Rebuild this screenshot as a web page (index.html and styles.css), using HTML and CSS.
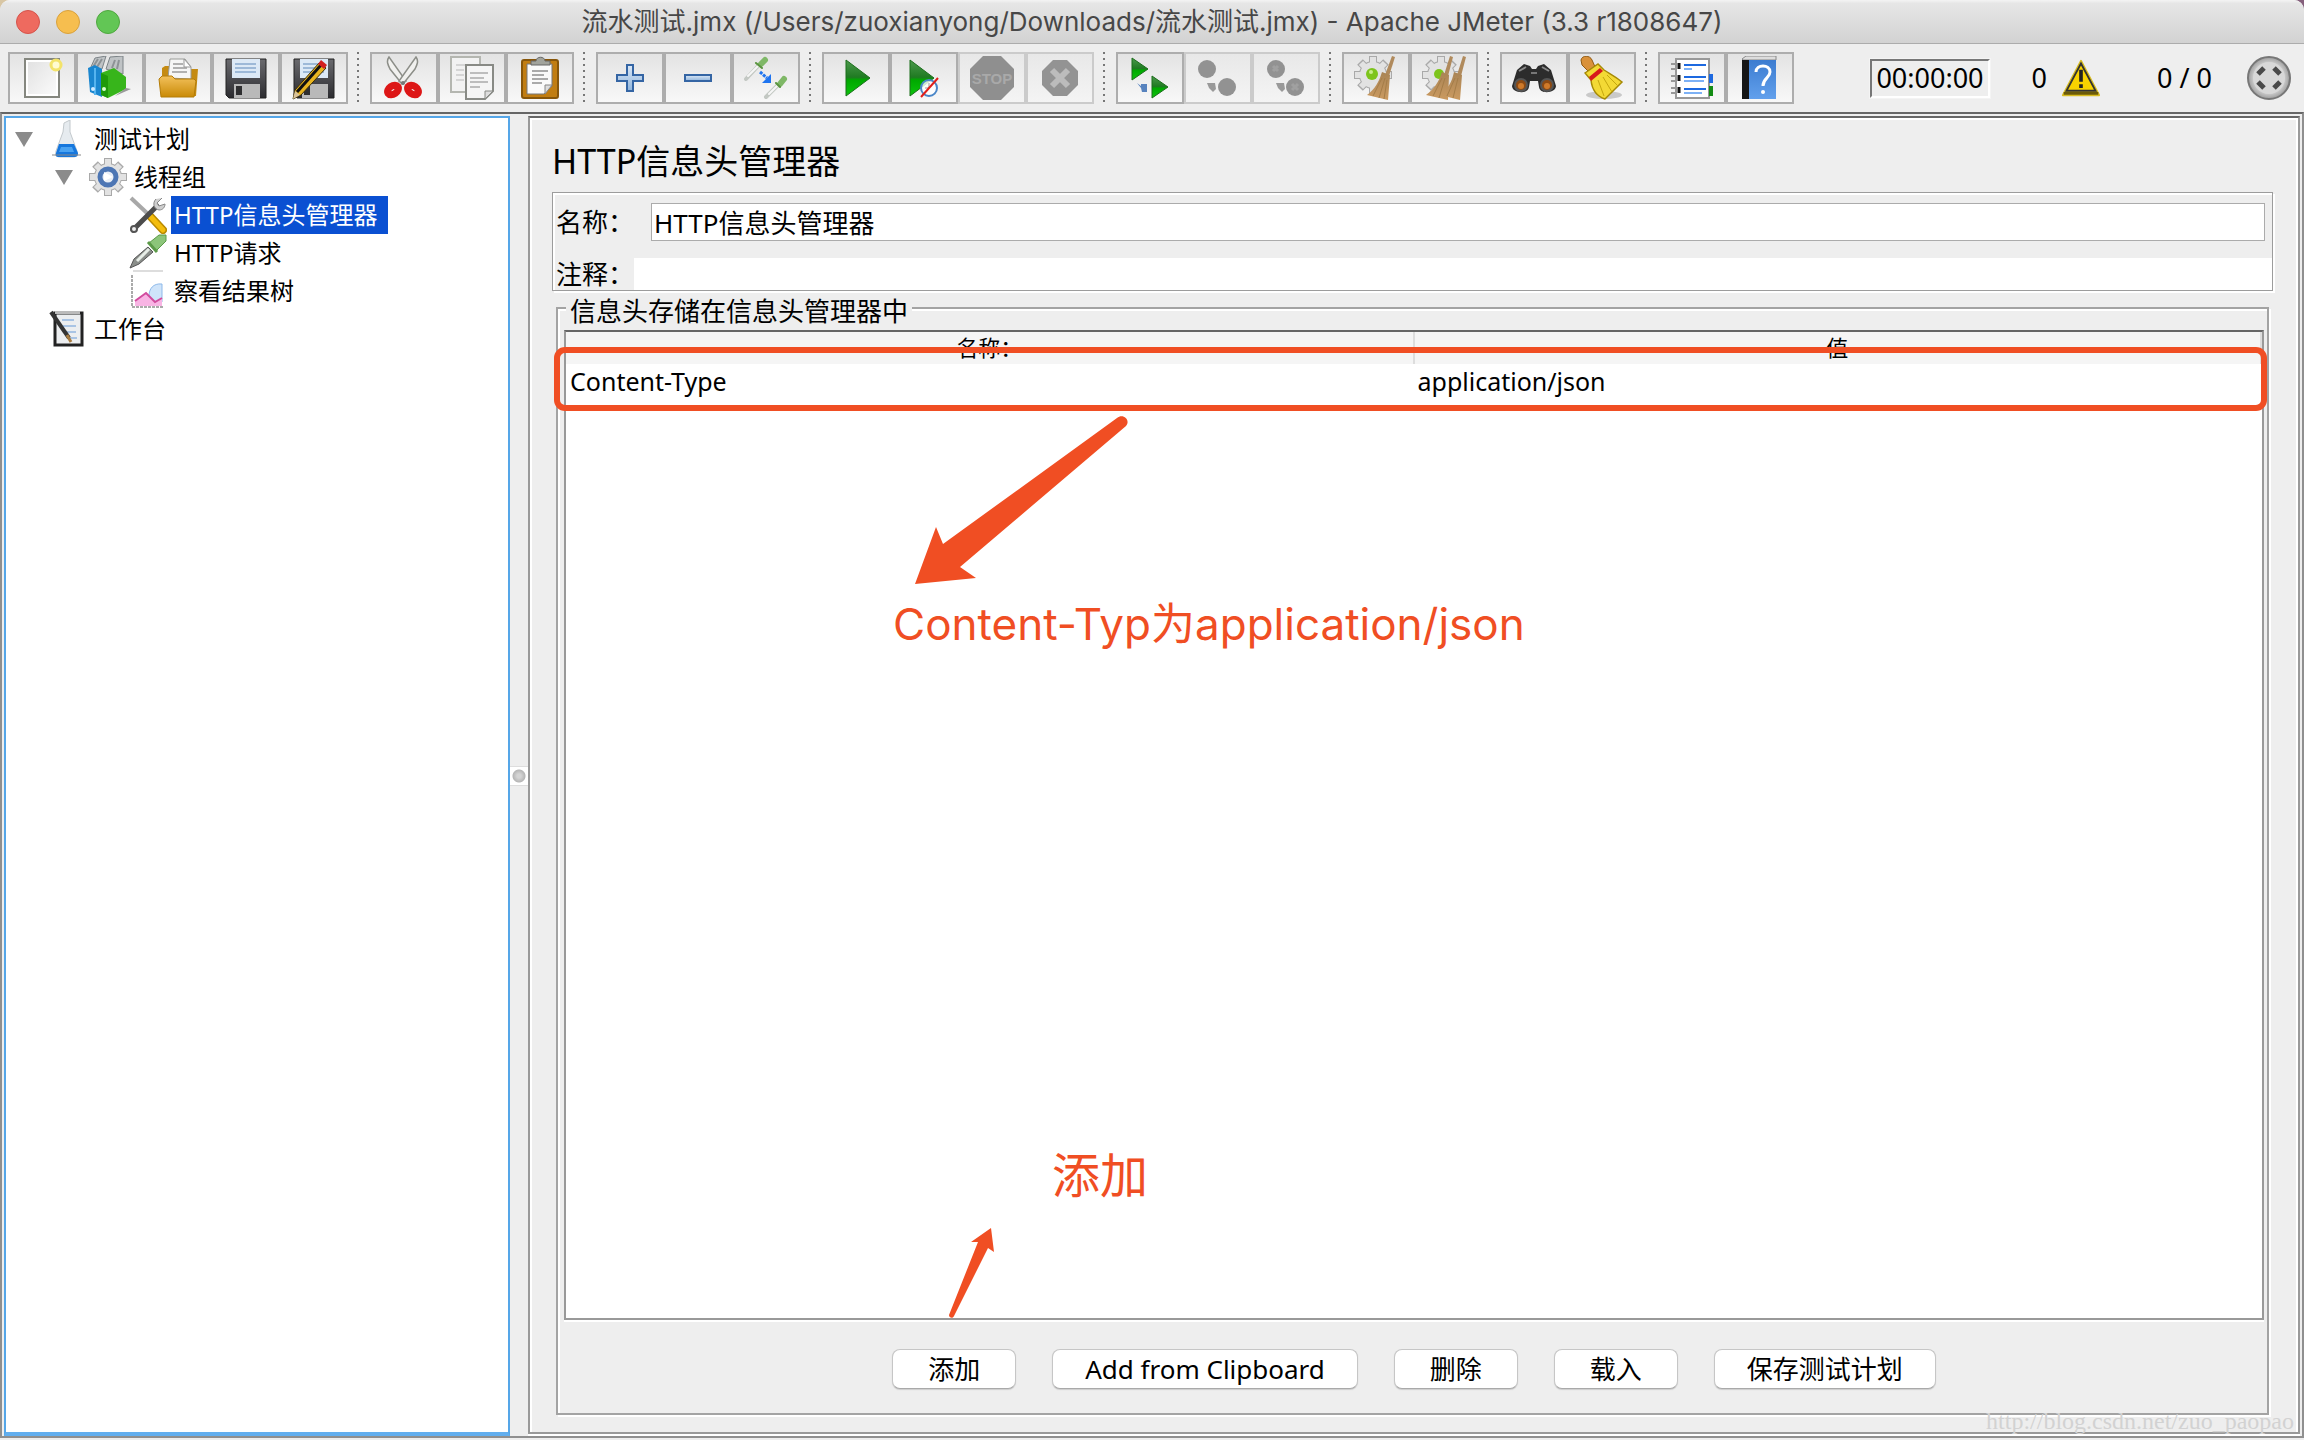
FILE: index.html
```html
<!DOCTYPE html>
<html lang="zh-CN">
<head>
<meta charset="utf-8">
<title>流水测试.jmx - Apache JMeter</title>
<link rel="stylesheet" href="styles.css">
</head>
<body>
<svg class="defs" aria-hidden="true">
  <defs>
    <linearGradient id="green" x1="0" y1="0" x2="0" y2="1"><stop offset="0" stop-color="#4c9a4c"/><stop offset=".48" stop-color="#1f7a22"/><stop offset=".55" stop-color="#00a800"/><stop offset="1" stop-color="#0cc40c"/></linearGradient>
    <linearGradient id="folder" x1="0" y1="0" x2="0" y2="1"><stop offset="0" stop-color="#f3c15c"/><stop offset="1" stop-color="#c98a06"/></linearGradient>
    <linearGradient id="disk" x1="0" y1="0" x2="0" y2="1"><stop offset="0" stop-color="#6a6a6e"/><stop offset="1" stop-color="#2c2c30"/></linearGradient>
    <linearGradient id="paper" x1="0" y1="0" x2="1" y2="1"><stop offset="0" stop-color="#e2e2e2"/><stop offset="1" stop-color="#fafafa"/></linearGradient>
    <linearGradient id="bluebar" x1="0" y1="0" x2="0" y2="1"><stop offset="0" stop-color="#dbe8f6"/><stop offset="1" stop-color="#8fb4dc"/></linearGradient>
    <linearGradient id="straw" x1="0" y1="0" x2="0" y2="1"><stop offset="0" stop-color="#a98455"/><stop offset="1" stop-color="#cb9a60"/></linearGradient>
    <linearGradient id="book" x1="0" y1="0" x2="0" y2="1"><stop offset="0" stop-color="#3c7cd0"/><stop offset="1" stop-color="#62a0ec"/></linearGradient>
    <radialGradient id="knob"><stop offset="0" stop-color="#fff"/><stop offset=".7" stop-color="#d2d2d2"/><stop offset="1" stop-color="#9c9c9c"/></radialGradient>
    <g id="gear"><circle r="14" fill="#a9a9a9"/><path d="M0-19V19M-19 0H19M-13-13 13 13M-13 13 13-13" stroke="#a9a9a9" stroke-width="8"/><path d="M0-18V18M-18 0H18M-12-12 12 12M-12 12 12-12" stroke="#e2e2e2" stroke-width="6"/><circle r="13" fill="#e2e2e2"/></g>
    <g id="floppy"><path d="M2 3h40v39H5l-3-3z" fill="url(#disk)" stroke="#222"/><path d="M8 3h28v19H8z" fill="#dce9f6"/><path d="M11 8h21M11 12h21M11 16h21" stroke="#9db9d8" stroke-width="2"/><path d="M10 28h26v14H10z" fill="#b9b9b9"/><path d="M12 30h6v9h-6z" fill="#2f2f31"/></g>
  </defs>
</svg>

<header class="titlebar">
  <div class="lights"><span class="light close"></span><span class="light minimise"></span><span class="light zoom"></span></div>
  <h1 class="window-title">流水测试.jmx (/Users/zuoxianyong/Downloads/流水测试.jmx) - Apache JMeter (3.3 r1808647)</h1>
</header>

<div class="toolbar" role="toolbar">
  <div class="group">
    <button class="tool" aria-label="新建"><svg viewBox="0 0 44 44"><path d="M5 3h34v38H5z" fill="#fff" stroke="#85877f" stroke-width="2"/><path d="M8 6h28v32H8z" fill="url(#paper)"/><circle cx="36" cy="9" r="5" fill="#fffbd0" stroke="#f3e36a" stroke-width="3"/></svg></button>
    <button class="tool" aria-label="模板"><svg viewBox="0 0 44 44"><path d="M2 13 7 2 18 0 14 13zM18 13 22 1 35 0v18z" fill="#bfc3c5" stroke="#7c8387"/><path d="M5 11 10 3M9 11 14 3M24 12 27 4M29 13 31 4" stroke="#8d9295" stroke-width="2"/><path d="M0 12 7 9l7 4v28L2 36z" fill="#1a86cf"/><path d="M7 12v27" stroke="#55b4ef" stroke-width="2"/><path d="M13 17 26 12l12 9v12L20 42l-7-3z" fill="#37b51b"/><path d="M13 17l7 3v22l-7-3z" fill="#1f9a0a"/><circle cx="16" cy="33" r="2" fill="#d9ffd0"/><circle cx="5" cy="33" r="2" fill="#cfeaff"/><path d="M38 32l5 1-16 7z" fill="#999"/></svg></button>
    <button class="tool" aria-label="打开"><svg viewBox="0 0 44 44"><path d="M6 12 9 10h4v10h22v-7h7L40 40H6z" fill="#c58b12"/><path d="M12 22 14 3h15l6 8v12z" fill="#f6f6f6" stroke="#9a9c98"/><path d="M17 8h10M17 12h14M16 16h15" stroke="#b1b1b1" stroke-width="2"/><path d="M28 3v8h7z" fill="#fff" stroke="#999"/><path d="M3 23l3-3h10l3 3h19l2 2-2 16H5z" fill="url(#folder)" stroke="#b47c08"/></svg></button>
    <button class="tool" aria-label="保存"><svg viewBox="0 0 44 44"><use href="#floppy"/></svg></button>
    <button class="tool" aria-label="另存为"><svg viewBox="0 0 44 44"><use href="#floppy"/><path d="M1 43 3 34 27 7l7 5L9 39z" fill="#e9b520" stroke="#3d2f0b"/><path d="M5 36 29 9" stroke="#111" stroke-width="3"/><path d="m26 8 3-4 6 5-3 4z" fill="#d32020"/><path d="m1 43 2-8 5 4z" fill="#d9c39a"/></svg></button>
  </div>
  <span class="divider"></span>
  <div class="group">
    <button class="tool" aria-label="剪切"><svg viewBox="0 0 44 44"><g fill="#f1f1ef" stroke="#8c8e88" stroke-width="1.5"><path d="M7 1C4 5 6 9 8 13l12 15 4-3z"/><path d="M34 1c3 4 1 8-1 12L21 28l-4-3z"/></g><g fill="none" stroke="#dd1717" stroke-width="7"><ellipse cx="11" cy="34" rx="6" ry="4" transform="rotate(-35 11 34)"/><ellipse cx="31" cy="34" rx="6" ry="4" transform="rotate(35 31 34)"/></g><circle cx="21" cy="27" r="2" fill="#777"/></svg></button>
    <button class="tool" aria-label="复制"><svg viewBox="0 0 44 44"><path d="M1 1h29v35H1z" fill="#f2f2f2" stroke="#b4b6b0" stroke-width="2"/><path d="M6 9h12M6 14h8M6 19h8M6 24h8" stroke="#d5d5d5" stroke-width="2"/><path d="M16 9h27v26l-8 8H16z" fill="#f5f5f5" stroke="#888a85" stroke-width="2"/><path d="M20 17h18M20 22h14M20 26h18M20 31h10" stroke="#bdbdbd" stroke-width="2"/><path d="M43 35h-8v8z" fill="#ddd" stroke="#888a85"/></svg></button>
    <button class="tool" aria-label="粘贴"><svg viewBox="0 0 44 44"><rect x="4" y="4" width="36" height="38" rx="2" fill="#c17d11" stroke="#87560a" stroke-width="2"/><path d="M9 8h25v22l-8 8H9z" fill="#fafafa" stroke="#777" stroke-width="1"/><path d="M14 15h16M14 19h12M14 23h16M14 27h10" stroke="#aaa" stroke-width="2"/><path d="M34 29h-7v9z" fill="#ddd" stroke="#888"/><path d="M13 9V5h5c0-5 9-5 9 0h5v4z" fill="#a1a39c" stroke="#666"/></svg></button>
  </div>
  <span class="divider"></span>
  <div class="group">
    <button class="tool" aria-label="展开"><svg viewBox="0 0 44 44"><path d="M19 9h6v10h10v6H25v10h-6V25H9v-6h10z" fill="url(#bluebar)" stroke="#3465a4" stroke-width="2"/></svg></button>
    <button class="tool" aria-label="收起"><svg viewBox="0 0 44 44"><path d="M9 19h26v6H9z" fill="url(#bluebar)" stroke="#3465a4" stroke-width="2"/></svg></button>
    <button class="tool" aria-label="切换"><svg viewBox="0 0 44 44"><g stroke-linecap="round"><path d="M2 23 15 9M22 41l12-12" stroke="#c3c8c3" stroke-width="4"/><path d="M4 20 15 9M25 38l9-9" stroke="#f6f6f6" stroke-width="2"/><path d="m17 8 4-4M36 28l4-5" stroke="#7fb867" stroke-width="6"/><path d="m12 7 6 5M32 27l4 4" stroke="#5a9440" stroke-width="2"/></g><path d="m16 16 7 6" stroke="#1e74f0" stroke-width="3" stroke-dasharray="3 1"/><path d="M27 18v9h-9z" fill="#1e74f0"/></svg></button>
  </div>
  <span class="divider"></span>
  <div class="group">
    <button class="tool" aria-label="启动"><svg viewBox="0 0 44 44"><path d="m12 4 24 18-24 18z" fill="url(#green)" stroke="#1b6e1b"/></svg></button>
    <button class="tool" aria-label="不停顿启动"><svg viewBox="0 0 44 44"><path d="m8 4 24 18L8 40z" fill="url(#green)" stroke="#1b6e1b"/><circle cx="27" cy="32" r="8" fill="#fff" fill-opacity=".8" stroke="#4a86c8" stroke-width="2"/><path d="M27 27v5h-4" stroke="#999" fill="none"/><path d="M19 41 36 22" stroke="#e0201b" stroke-width="2"/></svg></button>
    <button class="tool" disabled aria-label="停止"><svg viewBox="0 0 44 44"><path d="M13 0h18l13 13v18L31 44H13L0 31V13z" fill="#8f8f8f"/><text class="stop-word" x="22" y="28" text-anchor="middle">STOP</text></svg></button>
    <button class="tool" disabled aria-label="关闭"><svg viewBox="0 0 44 44"><path d="M15 4h14l11 11v14L29 40H15L4 29V15z" fill="#939393"/><path d="m14 14 16 16M30 14 14 30" stroke="#bcbcbc" stroke-width="6"/></svg></button>
  </div>
  <span class="divider"></span>
  <div class="group">
    <button class="tool" aria-label="远程启动"><svg viewBox="0 0 44 44"><path d="m4 2 16 11L4 24z" fill="url(#green)" stroke="#1b6e1b"/><path d="m24 20 16 11-16 11z" fill="url(#green)" stroke="#1b6e1b"/><path d="m9 27 4 3v-2l6 0v8h-5l-1-4z" fill="#5883be"/></svg></button>
    <button class="tool" disabled aria-label="远程停止"><svg viewBox="0 0 44 44"><circle cx="11" cy="13" r="9" fill="#929292"/><circle cx="31" cy="31" r="9" fill="#929292"/><path d="m11 27 8 0 1 6-3 3-4-4z" fill="#999"/></svg></button>
    <button class="tool" disabled aria-label="远程关闭"><svg viewBox="0 0 44 44"><circle cx="12" cy="13" r="9" fill="#929292"/><circle cx="31" cy="31" r="9" fill="#929292"/><path d="m9 10 5 5m0-5-5 5m19 13 6 6m0-6-6 6" stroke="#a0a0a0" stroke-width="3"/><path d="m12 27 8 0 1 6-3 3-4-4z" fill="#999"/></svg></button>
  </div>
  <span class="divider"></span>
  <div class="group">
    <button class="tool" aria-label="清除"><svg viewBox="0 0 44 44"><use href="#gear" x="19" y="19"/><circle cx="18" cy="18" r="6" fill="#7dc41c"/><circle cx="17" cy="16" r="2" fill="#c7ec8a"/><path d="m38 0 3 1-6 19-4-1z" fill="#b08a5c"/><path d="m28 16 8 3-2 25-21-5c8-6 12-13 15-23z" fill="url(#straw)"/><path d="m28 22-9 18M31 22l-6 20M33 24l-3 19" stroke="#a57d48"/></svg></button>
    <button class="tool" aria-label="清除全部"><svg viewBox="0 0 44 44"><use href="#gear" x="19" y="19"/><circle cx="17" cy="18" r="5" fill="#7dc41c"/><path d="m28 0 3 1-5 19-4-1zM41 0l3 1-5 19-4-1z" fill="#b08a5c"/><path d="m20 16 7 3-1 25-22-5c8-6 13-13 16-23z" fill="url(#straw)"/><path d="m32 16 8 3-2 25-20-5c8-6 12-13 14-23z" fill="url(#straw)"/><path d="m20 22-9 18M23 22l-6 20M33 22l-8 18M36 22l-5 20" stroke="#a57d48"/></svg></button>
  </div>
  <span class="divider"></span>
  <div class="group">
    <button class="tool" aria-label="查找"><svg viewBox="0 0 44 44"><path d="M0 30 5 14l7-6 6 2 2 3h4l2-3 6-2 7 6 5 16c0 7-16 9-17 1l-1-6h-8l-1 6c-1 8-17 6-17-1z" fill="#2c2c2c"/><path d="m7 15 7-4M30 11l7 4" stroke="#8a8a8a" stroke-width="2"/><path d="M19 17h6" stroke="#777" stroke-width="2"/><circle cx="9" cy="29" r="6" fill="#8d4a12" stroke="#555" stroke-width="2"/><circle cx="35" cy="29" r="6" fill="#8d4a12" stroke="#555" stroke-width="2"/><circle cx="9" cy="30" r="3" fill="#cf7a2a"/><circle cx="35" cy="30" r="3" fill="#cf7a2a"/></svg></button>
    <button class="tool" aria-label="重置查找"><svg viewBox="0 0 44 44"><ellipse cx="24" cy="39" rx="18" ry="4" fill="#c9c9c9"/><path d="M1 4c1-5 9-5 11 0l4 9-6 4-8-8z" fill="#d9913a" stroke="#8f5a14"/><path d="m5 17 13-9 6 6c6 4 11 6 18 12L25 43C16 40 12 34 11 24z" fill="#f3d935" stroke="#a68a06" stroke-width="1.5"/><path d="m9 21 11-9 3 3-12 10z" fill="#d8181b"/><path d="m18 24 6 16M23 21l9 15M27 19l11 11" stroke="#c5a70e"/></svg></button>
  </div>
  <span class="divider"></span>
  <div class="group">
    <button class="tool" aria-label="函数助手"><svg viewBox="0 0 44 44"><path d="M6 3h33v39H6z" fill="#fff" stroke="#999" stroke-width="2"/><path d="M14 9h22M14 21h22M14 33h22" stroke="#1d69e0" stroke-width="2"/><path d="M14 13h8M14 25h20M14 37h18" stroke="#7db1f5" stroke-width="2"/><path d="M9 7v6M9 19v6M9 31v6" stroke="#111" stroke-width="3"/><path d="M1 8h6M1 13h6M1 20h6M1 25h6M1 32h6M1 37h6" stroke="#999" stroke-width="2"/><path d="M41 18v9" stroke="#1d69e0" stroke-width="4"/><path d="M41 30v10" stroke="#138c13" stroke-width="4"/></svg></button>
    <button class="tool" aria-label="帮助"><svg viewBox="0 0 44 44"><path d="M4 3 8 0h30v4H5z" fill="#ddd" stroke="#888"/><path d="M4 4h7v39H4z" fill="#151515"/><path d="M11 4h27v39H11z" fill="url(#book)"/><path d="M18 16c0-8 14-8 14 0 0 6-7 6-7 14" fill="none" stroke="#fff" stroke-width="3"/><circle cx="25" cy="36" r="2" fill="#fff"/></svg></button>
  </div>
  <div class="status">
    <output class="timer">00:00:00</output>
    <span class="errors">0<svg viewBox="0 0 44 44"><path d="M22 3 42 41H2z" fill="#f6cf00" stroke="#d8bc20" stroke-width="2" stroke-linejoin="round"/><path d="M22 6 38 36H6z" fill="#f8d200" stroke="#333" stroke-width="2"/><path d="M3 39h38" stroke="#6b5a08" stroke-width="3"/><path d="M22 13v13M22 29v4" stroke="#222" stroke-width="4"/></svg></span>
    <span class="threads">0 / 0</span>
    <svg class="running" viewBox="0 0 44 44"><circle cx="22" cy="22" r="21" fill="url(#knob)" stroke="#777" stroke-width="2"/><circle cx="22" cy="22" r="16" fill="#d8d8d8"/><path d="m11 18 6-6M27 12l6 6M11 26l6 6M27 32l6-6" stroke="#4a4a4a" stroke-width="5"/></svg>
  </div>
</div>

<main class="workspace">
  <nav class="tree-pane">
    <ul class="tree">
      <li><div class="node"><span class="twist open"></span><span class="icon"><svg viewBox="0 0 38 38"><path d="M15 3 21 0v12l7 19c1 5-1 6-4 6H11c-3 0-5-1-4-6l7-19z" fill="#e6ebef" stroke="#c2c8cc"/><path d="M10 24h15l4 9c0 3-1 4-4 4H10c-3 0-4-1-3-4z" fill="#1677dd"/><path d="M12 27h11l2 5H10z" fill="#4aa3f2"/><path d="M3 35h29" stroke="#888"/></svg></span><span class="label">测试计划</span></div>
        <ul>
          <li><div class="node"><span class="twist open"></span><span class="icon"><svg viewBox="0 0 38 38"><use href="#gear" x="19" y="19"/><circle cx="19" cy="19" r="8" fill="#e8eef6" stroke="#4d76b4" stroke-width="5"/><path d="m15 14 9 5-9 4z" fill="#fff"/></svg></span><span class="label">线程组</span></div>
            <ul>
              <li><div class="node"><span class="twist"></span><span class="icon"><svg viewBox="0 0 38 38"><path d="M2 2 20 19" stroke="#a8a8a8" stroke-width="4"/><path d="m21 20 13 14" stroke="#b98a00" stroke-width="8" stroke-linecap="round"/><path d="m21 20 13 14" stroke="#f4bd0c" stroke-width="5" stroke-linecap="round"/><path d="M4 34 28 10" stroke="#4c4c4c" stroke-width="5" stroke-linecap="round"/><path d="M27 3c-4 4-2 10 3 11 4 0 6-3 6-6l-6 2-2-3 5-5" fill="#cfcfcf" stroke="#888"/><circle cx="5" cy="33" r="3" fill="#eee" stroke="#555" stroke-width="2"/></svg></span><span class="label selected">HTTP信息头管理器</span></div></li>
              <li><div class="node"><span class="twist"></span><span class="icon"><svg viewBox="0 0 38 38"><path d="M4 37h30" stroke="#ddd" stroke-width="2"/><path d="m1 34 4-9L19 13l5 5-14 12z" fill="#8a8e8a" stroke="#555"/><path d="M8 27 20 15" stroke="#e8eee8" stroke-width="3"/><path d="M20 9 30 1h7v6l-10 10z" fill="#8cc57a" stroke="#5b9a48"/><path d="m19 8 9 10" stroke="#5b9a48" stroke-width="3"/></svg></span><span class="label">HTTP请求</span></div></li>
              <li><div class="node"><span class="twist"></span><span class="icon"><svg viewBox="0 0 38 38"><path d="M3 3v32h32" fill="none" stroke="#aaa" stroke-width="2" stroke-dasharray="3 1"/><path d="M33 12c-9-1-13 5-13 12l6 6h7z" fill="#cfe4fa" stroke="#8db9ea"/><path d="m6 29 11-8 9 9 7-4v8H6z" fill="#f8b4e4"/><path d="m6 29 11-8 9 9 7-4" fill="none" stroke="#d24b9e" stroke-width="2"/></svg></span><span class="label">察看结果树</span></div></li>
            </ul>
          </li>
        </ul>
      </li>
      <li><div class="node"><span class="twist"></span><span class="icon"><svg viewBox="0 0 38 38"><path d="M6 3h27v32H6z" fill="#eceef0" stroke="#222" stroke-width="3"/><path d="M6 1h25v3H6z" fill="#bbb"/><path d="M13 10h12M14 16h13M18 22h9M20 28h8" stroke="#a9c4e4" stroke-width="2"/><path d="m2 2 18 26" stroke="#333" stroke-width="4"/><path d="m18 25 4 7" stroke="#a77b3f" stroke-width="3"/></svg></span><span class="label">工作台</span></div></li>
    </ul>
  </nav>
  <div class="splitter"><span class="grip"></span></div>
  <section class="editor">
    <h2 class="heading">HTTP信息头管理器</h2>
    <div class="form">
      <div class="field name"><label for="name">名称：</label><input id="name" type="text" value="HTTP信息头管理器"></div>
      <div class="field comment"><label for="comment">注释：</label><input id="comment" type="text"></div>
    </div>
    <div class="headers" role="group" aria-labelledby="headers-title">
      <h3 class="group-title" id="headers-title">信息头存储在信息头管理器中</h3>
      <div class="table-box">
        <table class="grid">
          <thead><tr><th>名称：</th><th>值</th></tr></thead>
          <tbody><tr><td>Content-Type</td><td>application/json</td></tr></tbody>
        </table>
        <div class="mark-row"></div>
        <svg class="mark-arrow-large" viewBox="0 0 214 168"><path d="M0 168 21 111l7 17L202 2c6-5 14 2 9 8L45 151l16 11z" fill="#f04e23"/></svg>
        <p class="mark mark-type">Content-Typ为application/json</p>
        <p class="mark mark-add">添加</p>
        <svg class="mark-arrow-small" viewBox="0 0 46 90"><path d="M42 0 22 14l7 0L0 87c0 3 4 4 5 1L39 20l6 4z" fill="#f04e23"/></svg>
      </div>
      <div class="actions">
        <button class="action">添加</button>
        <button class="action">Add from Clipboard</button>
        <button class="action">删除</button>
        <button class="action">载入</button>
        <button class="action">保存测试计划</button>
      </div>
    </div>
  </section>
</main>
<div class="watermark">http://blog.csdn.net/zuo_paopao</div>
</body>
</html>
```

FILE: styles.css
```css
* { box-sizing: border-box; }
html { background: linear-gradient(90deg, #d8c6a4 50%, #85607c 50%); }
body {
  margin: 0;
  height: 100vh;
  display: flex;
  flex-direction: column;
  padding-bottom: 2px;
  overflow: hidden;
  border-radius: 10px 10px 0 0;
  background: #eee;
  color: #000;
  font-family: "Noto Sans", "Noto Sans CJK SC", sans-serif;
  font-size: 26px;
}
h1, h2, h3, p, ul { margin: 0; padding: 0; font-weight: 400; }
ul { list-style: none; }
.defs { position: absolute; width: 0; height: 0; }

/* Title bar */
.titlebar {
  flex: none;
  height: 44px;
  display: flex;
  align-items: center;
  padding: 0 16px;
  background: linear-gradient(#f4f4f4, #e6e6e6 8%, #d2d2d2);
  border-bottom: 1px solid #acacac;
}
.lights { display: flex; gap: 16px; flex: 1; }
.titlebar::after { content: ""; flex: 1; }
.light { width: 24px; height: 24px; border-radius: 50%; border: 1px solid; }
.close { background: #ee6a5f; border-color: #d5534b; }
.minimise { background: #f6be4f; border-color: #d9a13c; }
.zoom { background: #62c655; border-color: #4fa73f; }
.window-title {
  font-family: Inter, "Noto Sans CJK SC", sans-serif;
  font-size: 26px;
  line-height: 40px;
  color: #474747;
  white-space: nowrap;
}

/* Toolbar */
.toolbar { flex: none; display: flex; align-items: center; padding: 8px; height: 68px; }
.group { display: flex; }
.tool {
  width: 68px;
  height: 52px;
  padding: 0;
  display: flex;
  align-items: center;
  justify-content: center;
  border: 2px solid #adadad;
  background: linear-gradient(#e3e3e3, #f8f8f8);
}
.tool:disabled { border-color: #cbcbcb; background: linear-gradient(#e8e8e8, #f4f4f4); }
.tool svg { width: 44px; height: 44px; }
.stop-word { font: 700 15px "Liberation Sans", sans-serif; fill: #a9a9a9; }
.divider {
  width: 2px;
  height: 52px;
  margin: 0 11px 0 9px;
  background: repeating-linear-gradient(#777 0 2px, transparent 2px 6px);
}
.status { flex: 1; display: flex; align-items: center; justify-content: flex-end; font-size: 27px; line-height: 34px; }
.timer {
  border: 2px solid;
  border-color: #777 #fff #fff #777;
  padding: 0 4px;
  height: 39px;
  outline: 1px solid #f4f4f4;
}
.errors { display: flex; align-items: center; gap: 12px; margin-left: 42px; }
.errors svg { width: 44px; height: 40px; }
.threads { margin: 0 34px 0 54px; }
.running { width: 46px; height: 44px; margin-right: 4px; }

/* Work area */
.workspace {
  flex: 1;
  min-height: 0;
  display: flex;
  border: 2px solid #8f8f8f;
  border-top-color: #666;
  padding: 2px 2px 0 2px;
}
.tree-pane {
  width: 506px;
  flex: none;
  background: #fff;
  border: 2px solid #55a6e8;
  border-bottom: 4px solid #62aeee;
  padding: 2px;
  font-size: 24px;
}
.node { display: flex; align-items: center; height: 38px; }
.tree ul { padding-left: 40px; }
.twist { width: 40px; padding-left: 7px; flex: none; }
.open::before { content: ""; display: block; width: 0; border: 9px solid transparent; border-top: 15px solid #8b8b8b; border-bottom: 0; }
.icon { width: 40px; display: flex; justify-content: center; margin-right: 3px; }
.icon svg { width: 38px; height: 38px; }
.label { padding: 0 11px 0 3px; line-height: 38px; white-space: nowrap; }
.selected { background: #0a50d2; color: #fff; }
.splitter { width: 18px; flex: none; display: flex; align-items: center; }
.grip {
  width: 18px;
  height: 20px;
  border-top: 1px solid #ddd;
  border-bottom: 1px solid #ddd;
  background: radial-gradient(circle, #d4d4d4 0 2px, #b6b6b6 6px, #fff 7px);
}

/* Editor */
.editor {
  flex: 1;
  min-width: 0;
  display: flex;
  flex-direction: column;
  margin-bottom: 2px;
  padding: 18px 25px 17px 20px;
  border: 2px solid #999;
  border-top-color: #666;
  box-shadow: inset 2px 2px #fff, inset -2px 0 #fff, 0 2px #fff;
}
.heading { font-size: 34px; line-height: 50px; padding-left: 2px; margin-bottom: 6px; }
.form {
  margin-left: 2px;
  border: 1px solid #9c9c9c;
  box-shadow: inset 2px 2px #fff, 2px 2px #fff;
  padding: 10px 0 0 3px;
}
.field { display: flex; align-items: center; }
.field label { line-height: 38px; white-space: nowrap; }
.field input {
  flex: 1;
  min-width: 0;
  height: 38px;
  padding: 0 2px;
  border: 1px solid #ababab;
  outline: 0;
  background: #fff;
  color: #000;
  font: inherit;
}
.name label { width: 95px; }
.name { margin: 0 7px 17px 0; }
.comment label { width: 78px; line-height: 32px; }
.comment input { height: 32px; border: 0; }
.headers {
  flex: 1;
  min-height: 0;
  display: flex;
  flex-direction: column;
  margin: 16px 4px 0 6px;
  padding: 0 3px 0 6px;
  border: 2px solid #a3a3a3;
  box-shadow: inset 2px 2px #fff, 2px 2px #fff;
}
.group-title {
  align-self: flex-start;
  font-size: 26px;
  line-height: 30px;
  margin: -13px 0 4px 2px;
  padding: 0 4px;
  background: #eee;
}
.table-box {
  flex: 1;
  position: relative;
  background: #fff;
  border: 2px solid #999;
  border-top-color: #666;
  box-shadow: 0 2px #fff;
}
.grid { width: 100%; border-collapse: collapse; table-layout: fixed; font-size: 25px; }
.grid th {
  height: 32px;
  padding: 0;
  background: #f5f5f5;
  border-right: 2px solid #ddd;
  font-size: 22px;
  line-height: 30px;
  vertical-align: top;
  font-weight: 400;
}
.grid td { height: 36px; padding: 0 4px; line-height: 34px; vertical-align: top; }
.actions {
  flex: none;
  display: flex;
  justify-content: center;
  gap: 36px;
  padding: 29px 0 24px;
}
.action {
  min-width: 124px;
  height: 40px;
  padding: 0 32px;
  border: 1px solid #c6c6c6;
  border-bottom-color: #a9a9a9;
  border-radius: 8px;
  background: #fff;
  box-shadow: 0 1px 1px #ccc;
  color: #000;
  font: inherit;
  line-height: 36px;
}

/* Annotations drawn over the table */
.mark-row {
  position: absolute;
  top: 15px;
  left: -12px;
  right: -5px;
  height: 64px;
  border: 6px solid #f04e23;
  border-radius: 11px;
}
.mark {
  position: absolute;
  color: #f04e23;
  font: 48px/60px Inter, "Noto Sans CJK SC", sans-serif;
  white-space: nowrap;
}
.mark-type { left: 327px; top: 262px; font-size: 44px; }
.mark-add { left: 486px; bottom: 112px; }
.mark-arrow-large { position: absolute; left: 349px; top: 84px; width: 214px; height: 168px; }
.mark-arrow-small { position: absolute; left: 383px; bottom: 0; width: 46px; height: 90px; }
.watermark {
  position: absolute;
  right: 10px;
  bottom: 4px;
  font: 24px/30px "Liberation Serif", serif;
  color: #d2d2d2;
}
```
